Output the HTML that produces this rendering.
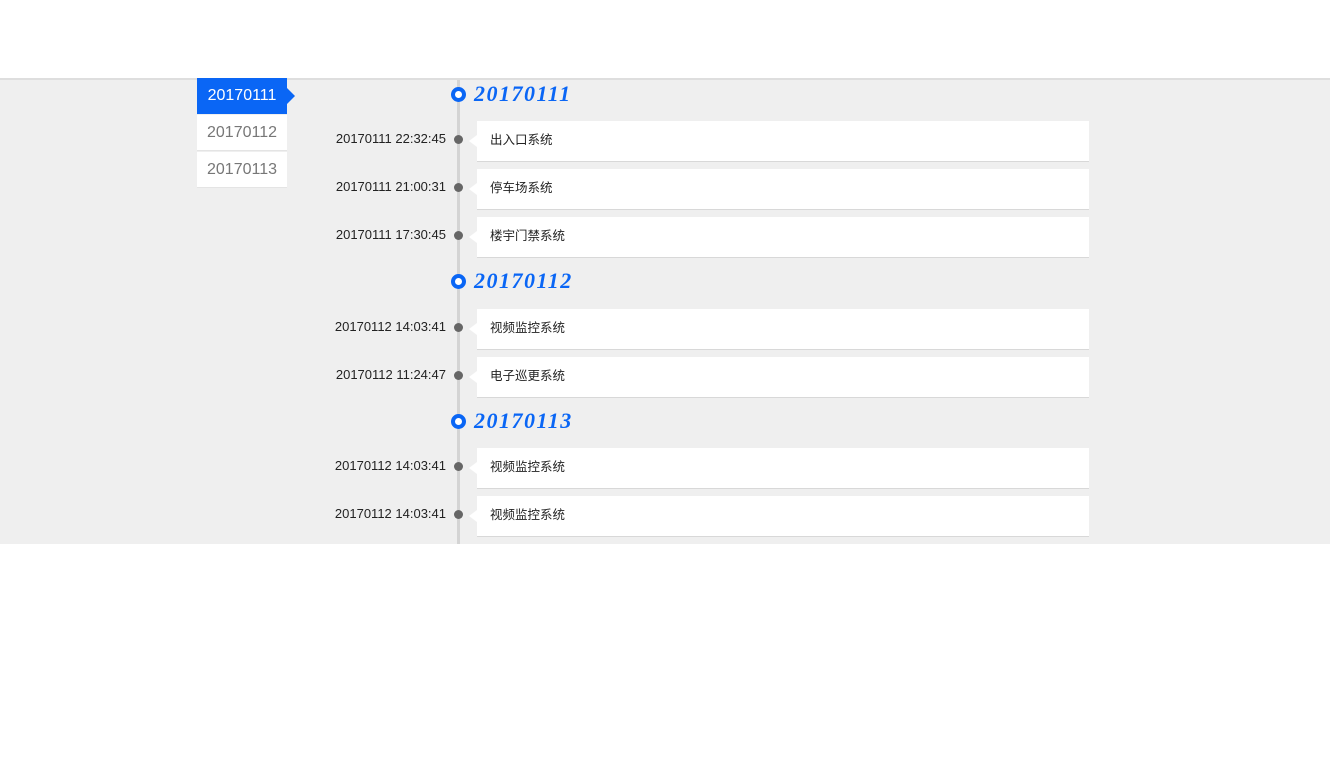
<!DOCTYPE html>
<html><head><meta charset="utf-8"><style>
*{margin:0;padding:0;box-sizing:border-box}
body{width:1330px;height:768px;background:#fff;position:relative;font-family:"Liberation Sans","Noto Sans CJK SC",sans-serif;overflow:hidden}
.band{position:absolute;left:0;top:78px;width:1330px;height:466px;background:#efefef;border-top:2px solid #dedede}
.nav{position:absolute;left:197px;width:90px;height:36px;background:#fff;color:#777;font-size:16px;line-height:36px;text-align:center;border-bottom:1px solid #e4e4e4}
.nav.act{background:#0a66f5;color:#fff;border-bottom:none}
.nav.act:after{content:"";position:absolute;right:-8px;top:10px;border-left:8px solid #0a66f5;border-top:8px solid transparent;border-bottom:8px solid transparent}
.line{position:absolute;left:457px;top:80px;width:3px;height:464px;background:#d4d4d4}
.ring{position:absolute;left:451px;width:15px;height:15px;border-radius:50%;border:4px solid #0a66f5;background:#fff}
.h{position:absolute;left:474px;font-family:"Liberation Serif",serif;font-style:italic;font-weight:bold;font-size:22px;color:#0a66f5;letter-spacing:1.5px}
.t{position:absolute;right:884px;font-size:13px;color:#222;text-align:right;white-space:nowrap}
.d{position:absolute;left:454px;width:9px;height:9px;border-radius:50%;background:#666}
.c{position:absolute;left:477px;width:612px;height:41px;background:#fff;border-bottom:1px solid #d8d8d8;font-size:12.5px;color:#222;line-height:38px;padding-left:13px}
.c:before{content:"";position:absolute;left:-8px;top:14px;border-right:8px solid #fff;border-top:6px solid transparent;border-bottom:6px solid transparent}
</style></head><body>
<div class="band"></div>
<div class="nav act" style="top:78px">20170111</div>
<div class="nav" style="top:115px">20170112</div>
<div class="nav" style="top:152px">20170113</div>
<div class="line"></div>

<div class="ring" style="top:87px"></div><div class="h" style="top:81px">20170111</div>
<div class="t" style="top:131px">20170111 22:32:45</div><div class="d" style="top:135px"></div><div class="c" style="top:121px">出入口系统</div>
<div class="t" style="top:179px">20170111 21:00:31</div><div class="d" style="top:183px"></div><div class="c" style="top:169px">停车场系统</div>
<div class="t" style="top:227px">20170111 17:30:45</div><div class="d" style="top:231px"></div><div class="c" style="top:217px">楼宇门禁系统</div>

<div class="ring" style="top:274px"></div><div class="h" style="top:268px">20170112</div>
<div class="t" style="top:319px">20170112 14:03:41</div><div class="d" style="top:323px"></div><div class="c" style="top:309px">视频监控系统</div>
<div class="t" style="top:367px">20170112 11:24:47</div><div class="d" style="top:371px"></div><div class="c" style="top:357px">电子巡更系统</div>

<div class="ring" style="top:414px"></div><div class="h" style="top:408px">20170113</div>
<div class="t" style="top:458px">20170112 14:03:41</div><div class="d" style="top:462px"></div><div class="c" style="top:448px">视频监控系统</div>
<div class="t" style="top:506px">20170112 14:03:41</div><div class="d" style="top:510px"></div><div class="c" style="top:496px">视频监控系统</div>
</body></html>
